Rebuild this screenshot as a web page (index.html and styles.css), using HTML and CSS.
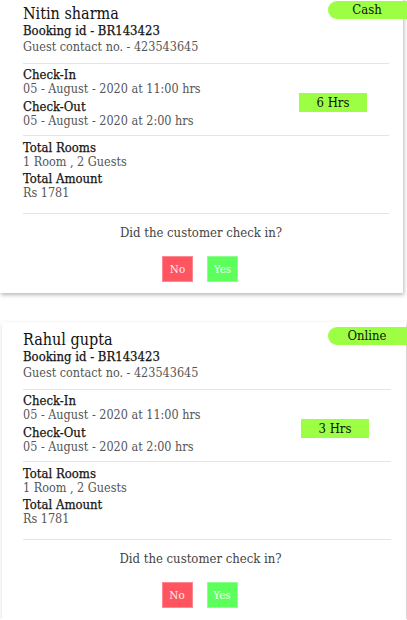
FILE: index.html
```html
<!DOCTYPE html>
<html>
<head>
<meta charset="utf-8">
<link rel="stylesheet" href="styles.css">
</head>
<body>
<main class="list">
  <section class="card card-first">
    <span class="badge">Cash</span>
    <div class="head">
      <h2 class="name">Nitin sharma</h2>
      <p class="label">Booking id - BR143423</p>
      <p class="value contact">Guest contact no. - 423543645</p>
    </div>
    <div class="stay">
      <div class="stay-info">
        <p class="label">Check-In</p>
        <p class="value">05 - August - 2020 at 11:00 hrs</p>
        <p class="label gap">Check-Out</p>
        <p class="value">05 - August - 2020 at 2:00 hrs</p>
      </div>
      <span class="hours">6 Hrs</span>
    </div>
    <div class="totals">
      <p class="label">Total Rooms</p>
      <p class="value">1 Room , 2 Guests</p>
      <p class="label gap2">Total Amount</p>
      <p class="value">Rs 1781</p>
    </div>
    <div class="ask">
      <p class="question">Did the customer check in?</p>
      <div class="actions">
        <button class="btn btn-no">No</button>
        <button class="btn btn-yes">Yes</button>
      </div>
    </div>
  </section>

  <section class="card card-second">
    <span class="badge">Online</span>
    <div class="head">
      <h2 class="name">Rahul gupta</h2>
      <p class="label">Booking id - BR143423</p>
      <p class="value contact">Guest contact no. - 423543645</p>
    </div>
    <div class="stay">
      <div class="stay-info">
        <p class="label">Check-In</p>
        <p class="value">05 - August - 2020 at 11:00 hrs</p>
        <p class="label gap">Check-Out</p>
        <p class="value">05 - August - 2020 at 2:00 hrs</p>
      </div>
      <span class="hours">3 Hrs</span>
    </div>
    <div class="totals">
      <p class="label">Total Rooms</p>
      <p class="value">1 Room , 2 Guests</p>
      <p class="label gap2">Total Amount</p>
      <p class="value">Rs 1781</p>
    </div>
    <div class="ask">
      <p class="question">Did the customer check in?</p>
      <div class="actions">
        <button class="btn btn-no">No</button>
        <button class="btn btn-yes">Yes</button>
      </div>
    </div>
  </section>
</main>
</body>
</html>
```
FILE: styles.css
```css
html, body {
  margin: 0;
  padding: 0;
  background: #ffffff;
  overflow: hidden;
}

body {
  font-family: "DejaVu Serif", "Noto Serif", serif;
  font-stretch: condensed;
  color: #222;
}

.list {
  display: flex;
  flex-direction: column;
  gap: 29px;
  margin-top: -4px;
}

.card {
  position: relative;
  background: #fff;
  height: 297px;
  box-sizing: border-box;
  box-shadow: 1px 2px 4px rgba(0, 0, 0, 0.28);
  padding: 9px 14px 0 23px;
}

.card-first {
  width: 403px;
}

.card-second {
  width: 404px;
  margin-left: 2px;
  padding-left: 21px;
  padding-right: 15px;
}

.badge {
  position: absolute;
  top: 5px;
  left: 328px;
  width: 84px;
  height: 18px;
  box-sizing: border-box;
  padding-right: 6px;
  background: #9cff44;
  border-radius: 10px 0 0 10px;
  font-size: 13px;
  line-height: 18px;
  text-align: center;
  color: #111;
}

.card-second .badge {
  left: 326px;
}

p, h2 {
  margin: 0;
}

.name {
  font-size: 16px;
  line-height: 18px;
  font-weight: normal;
  color: #111;
}

.label {
  font-size: 13px;
  line-height: 14px;
  font-weight: normal;
  color: #151515;
  -webkit-text-stroke: 0.25px #151515;
}

.head .label {
  line-height: 15px;
}

.value {
  font-size: 12.5px;
  line-height: 14px;
  color: #555;
}

.contact {
  line-height: 15px;
  margin-top: 1px;
}

.head {
  padding-bottom: 9px;
  border-bottom: 1px solid #ccff99;
}

.stay {
  display: flex;
  align-items: center;
  padding: 4px 0 7px;
  border-bottom: 1px solid #ccff99;
}

.stay-info {
  flex: 1;
}

.gap {
  margin-top: 4px;
}

.hours {
  width: 68px;
  height: 19px;
  margin: 8px 22px 0 0;
  background: #9cff44;
  font-size: 13px;
  line-height: 19px;
  text-align: center;
  color: #111;
}

.totals {
  padding: 5px 0 13px;
  border-bottom: 1px solid #ccff99;
}

.gap2 {
  margin-top: 3px;
}

.ask {
  padding: 11px 10px 0 0;
  text-align: center;
}

.card-second .ask {
  padding-right: 13px;
}

.question {
  font-size: 13px;
  line-height: 16px;
  color: #444;
}

.actions {
  display: flex;
  justify-content: center;
  gap: 14px;
  margin-top: 15px;
  padding-right: 2px;
}

.btn {
  width: 31px;
  height: 26px;
  padding: 0;
  font-family: inherit;
  font-stretch: condensed;
  font-size: 11.5px;
  color: #ffeeee;
  border: 1px solid;
  cursor: pointer;
}

.btn-no {
  background: #ff5561;
  border-color: #ff8890;
}

.btn-yes {
  background: #5cff5c;
  border-color: #8cff8c;
  color: #eeffee;
}
```
